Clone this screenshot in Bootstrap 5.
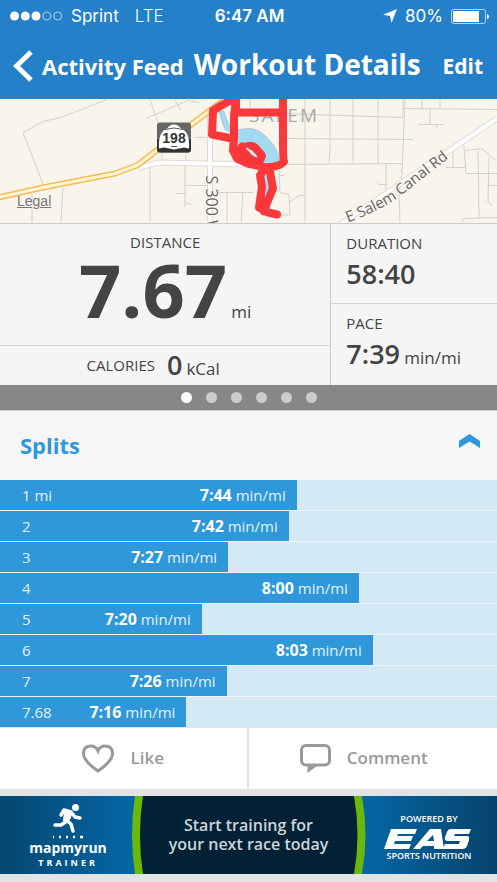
<!DOCTYPE html>
<html lang="en">
<head>
<meta charset="utf-8">
<meta name="viewport" content="width=device-width, initial-scale=1">
<title>Workout Details</title>
<link href="https://cdn.jsdelivr.net/npm/bootstrap@5.3.0/dist/css/bootstrap.min.css" rel="stylesheet">
<style>
body{font-family:"Open Sans","Noto Sans",sans-serif;background:#e3e3e3;color:#444;line-height:1.2}
button{font-family:inherit}
svg{display:block;flex:none}
.top{background:#2480c8;color:#fff}
.status{height:34px;font:17px/20px Inter,"Liberation Sans",sans-serif;padding:0 8px 2px 10px;display:grid;grid-template-columns:1fr auto 1fr}
.status strong{font-weight:600}
.lte{font-weight:300}
.bar{height:65px;padding:0 14px 2px 13px}
.bar a,.bar button{color:#fff;font-size:22px;font-weight:700;text-decoration:none;line-height:30px;white-space:nowrap}
.bar button{font-size:21px}
.bar h1{font-size:28px;font-weight:700;line-height:38px;margin:0 auto 4px 10px;white-space:nowrap}
.map{height:125px;background:#f9f4ec;border-bottom:1px solid #ccc;overflow:hidden}
.map svg{width:100%;height:100%}
.legal{left:17px;bottom:13px;font:14px/18px "Liberation Sans",Arial,sans-serif;color:#777}
.stats{background:#f5f5f5;height:161px}
.line-b{border-bottom:1px solid #d4d4d4}
.line-r{border-right:1px solid #c9c9c9}
.tag{font-size:15px;line-height:20px}
.unit{font-size:17px}
.num{font-size:27px;line-height:38px;font-weight:600}
.big{font-size:74px;line-height:76px;font-weight:700}
.dist{height:122px;padding-top:8px}
.cal{line-height:38px;height:38px}
.cell{padding:9px 0 0 15px;height:80px}
.cell .tag{margin-bottom:2px}
.pager{background:#878787;height:25px;gap:14px}
.pager button{width:11px;height:11px;border:0;padding:0;border-radius:50%;background:#ccc}
.pager button.on{background:#fff}
.splits-head{background:#f6f6f6;height:69px;padding:0 17px 0 20px;color:#2f98da;border-top:1px solid #cfcfcf}
.splits-head h2{font-size:22px;font-weight:700;margin:0}
.splits-head button{color:inherit;margin-bottom:8px}
.splits li{background:#d4e9f6;border-top:1px solid #eef7fc;height:31px}
.fill{background:#2f98da;color:#e3f2fb;height:30px;padding:0 11px 0 22px;font-size:15px;line-height:20px}
.fill b{color:#fff;font-size:16px}
.actions{background:#fff;height:62px;border-top:1px solid #e3e3e3}
.actions button{color:#999;font-size:17px;font-weight:600;border:0;background:none}
.actions button:first-child{border-right:2px solid #e6e6e6}
.ad{margin:7px 0 8px;height:78px;color:#fff;display:grid;grid-template-columns:29% 42% 29%;text-decoration:none;text-align:center}
.ad>svg{left:0;top:0;width:100%;height:100%}
.ad-copy{font-size:16px;line-height:19px;font-weight:600;color:#ccd4da}
.brand{font-size:14px;line-height:16px;font-weight:700}
.sub{font-size:9px;line-height:14px;font-weight:700;letter-spacing:3px}
.tiny{font-size:9px;line-height:11px;font-weight:600}
</style>
<script src="https://cdn.jsdelivr.net/npm/bootstrap@5.3.0/dist/js/bootstrap.bundle.min.js"></script>
</head>
<body>
<header class="top">
  <div class="status align-items-center">
    <div class="d-flex align-items-center">
      <svg width="53" height="10" viewBox="0 0 53 10" fill="#fff"><circle cx="4.500" cy="5" r="4.500"/><circle cx="15.300" cy="5" r="4.500"/><circle cx="26" cy="5" r="4.500"/><g fill="none" stroke="#b4d5ee"><circle cx="36.900" cy="5" r="4"/><circle cx="47.700" cy="5" r="4"/></g></svg>
      <span class="ms-2">Sprint</span><span class="lte ms-3">LTE</span>
    </div>
    <strong>6:47 AM</strong>
    <div class="d-flex align-items-center justify-content-end">
      <svg class="me-2" width="14" height="14" viewBox="0 0 14 14"><path d="M14 0 8.500 14 7 7 0 5.800z" fill="#fff"/></svg>
      <span class="me-1 pe-1">80%</span>
      <svg width="38" height="15" viewBox="0 0 38 15"><rect x=".5" y=".5" width="34" height="14" rx="2" fill="none" stroke="#b4d5ee"/><path d="M2 2h26v11H2z" fill="#fff"/><path d="M36 5q2 .5 2 2.500t-2 2.500z" fill="#fff"/></svg>
    </div>
  </div>
  <nav class="bar d-flex align-items-center">
    <a href="#" class="d-flex align-items-center gap-2"><svg width="21" height="32" viewBox="0 0 21 32"><path d="M18 2 3.500 16 18 30" fill="none" stroke="#fff" stroke-width="5"/></svg>Activity Feed</a>
    <h1>Workout Details</h1>
    <button class="btn p-0 border-0">Edit</button>
  </nav>
</header>
<main>
<section class="map position-relative" aria-label="Route map">
<svg viewBox="0 0 497 125" preserveAspectRatio="xMidYMid slice">
  <g fill="none" stroke="#d4d1cb" stroke-width="1">
    <path d="M107 1 61 19 43 23 23 34 44 88M150 1 158 24M146 20 188 2 199 4M175 2 181 12M63 89 61 124M32 95V124M150 68V124M162 64V54M193 39h17M186 55V64M185 64V109M185 87h25M176 95h10M185 104l6 2M218 94h32M227 94V124M243 94 241 124M250 94h3M305 0V124M330 0V52L329 64M353 0V65M378 0V65M282 15 403 19 403 0M287 40 413 41M286 66 403 65M405 0 402 75 399 94 400 124M403 10 497 11M422 0V10M440 0V10M430 10V26M419 26h25M436 30 437 26M386 65V93M376 83l3 3h8M400 71 403 75M464 48 466 75 497 75M453 51V69M446 69h20M465 52 482 50 496 62M478 52 479 120M489 59 488 104 493 107M489 87h8M489 75h8M462 124 463 120 497 119M279 71 280 94 289 96 290 116 280 117M289 104 299 97 305 97M250 0V10M280 77h4"/>
  </g>
  <g fill="none" stroke-linejoin="round">
    <path d="M340 126 497 20M138 69 160 64 250 66M210 12V125" stroke="#dedbd5" stroke-width="6"/>
    <path d="M340 126 497 20M138 69 160 64 250 66M210 12V125" stroke="#fff" stroke-width="4"/>
    <path d="M-2 99 43 89 115 75 137 67 158 51 210 12 226 0" stroke="#f2bd5a" stroke-width="6"/>
    <path d="M-2 99 43 89 115 75 137 67 158 51 210 12 226 0" stroke="#fff5cf" stroke-width="3"/>
  </g>
  <g fill="#a2daf0" stroke="#a0bdcb" stroke-width=".7">
    <path d="M218 11 224 13 230 29 240 31 247 30Q258 29 268 40 278 50 280 63L265 66 246 62 235 52 237 38 225 31z"/>
    <path d="M265 74 269 82 269 97 264 110 262 105z"/>
  </g>
  <text x="249" y="23" font-family="Open Sans, Noto Sans, sans-serif" fill="#aaa" font-size="19" letter-spacing="2">SALEM</text>
  <path d="M236 0V14L282 14M283-2V45Q283 62 284 63 281 68 266 69L248 65 237 60 233 52 234 38 234 18 236 1 228 3 213 12 212 36 232 40M237 52 243 57M244 49Q252 45 256 50L262 57Q260 66 249 65M242 48 248 59 257 64M264 70 260 77 262 88 259 109 268 114 277 116M266 70 270 73 273 90 268 102 264 113M261 98 260 106" fill="none" stroke="#fb2c2f" stroke-opacity=".94" stroke-width="8" stroke-linejoin="round" stroke-linecap="round"/>
  <path d="M247 50 255 57" stroke="#f9e4dc" stroke-width="2" stroke-linecap="round"/>
  <path id="canal" d="M348 124Q378 113 397 100L460 51" fill="none"/>
  <g font-family="Open Sans, Noto Sans, sans-serif" font-size="16" fill="#666" stroke="#f9f4ec" stroke-width="2" paint-order="stroke">
    <text transform="translate(206 77) rotate(90)">S 300 W</text>
    <text font-size="15"><textPath href="#canal">E Salem Canal Rd</textPath></text>
  </g>
  <rect x="157" y="24" width="34" height="30" rx="3" fill="#666"/><path d="M157 41h34v10q0 3-3 3h-28q-3 0-3-3z" fill="#333"/>
  <path d="M159 50Q158 33 167 30 170 26 174 26T181 30Q190 33 189 50L184 49 174 51 164 49z" fill="#fff"/>
  <path d="M165 31Q174 28 183 31M171 48h6" stroke="#555" fill="none"/>
  <text x="174" y="44" text-anchor="middle" font-family="Liberation Sans Narrow, Liberation Sans, Arial, sans-serif" font-weight="bold" font-size="14" fill="#333">198</text>
</svg>
<a href="#" class="legal position-absolute">Legal</a>
</section>
<section class="stats row g-0">
  <div class="col-8 line-r">
    <div class="dist line-b text-center">
      <div class="tag">DISTANCE</div>
      <div class="lh-1"><span class="big">7.67</span> <span class="unit">mi</span></div>
    </div>
    <div class="cal d-flex justify-content-center align-items-baseline pe-4"><span class="tag me-2 pe-1 align-self-center">CALORIES</span><span class="num me-1">0</span><span class="unit">kCal</span></div>
  </div>
  <div class="col-4">
    <div class="cell line-b"><div class="tag">DURATION</div><div class="num">58:40</div></div>
    <div class="cell"><div class="tag">PACE</div><div class="text-nowrap"><span class="num">7:39</span> <span class="unit">min/mi</span></div></div>
  </div>
</section>
<div class="pager d-flex justify-content-center align-items-center">
  <button class="on" aria-label="Page 1"></button><button aria-label="Page 2"></button><button aria-label="Page 3"></button><button aria-label="Page 4"></button><button aria-label="Page 5"></button><button aria-label="Page 6"></button>
</div>
<section>
  <div class="splits-head d-flex align-items-center justify-content-between"><h2>Splits</h2>
    <button class="btn p-0 border-0" aria-label="Collapse splits"><svg width="21" height="14" viewBox="0 0 21 14"><path d="M0 7 10.500 0 21 7v7L10.500 7.500 0 14z" fill="currentColor"/></svg></button></div>
  <ol class="splits list-unstyled m-0">
    <li><div class="fill d-flex justify-content-between align-items-center" style="width:59.7%"><span>1 mi</span><span><b>7:44</b> min/mi</span></div></li>
    <li><div class="fill d-flex justify-content-between align-items-center" style="width:58.1%"><span>2</span><span><b>7:42</b> min/mi</span></div></li>
    <li><div class="fill d-flex justify-content-between align-items-center" style="width:45.9%"><span>3</span><span><b>7:27</b> min/mi</span></div></li>
    <li><div class="fill d-flex justify-content-between align-items-center" style="width:72.2%"><span>4</span><span><b>8:00</b> min/mi</span></div></li>
    <li><div class="fill d-flex justify-content-between align-items-center" style="width:40.6%"><span>5</span><span><b>7:20</b> min/mi</span></div></li>
    <li><div class="fill d-flex justify-content-between align-items-center" style="width:75%"><span>6</span><span><b>8:03</b> min/mi</span></div></li>
    <li><div class="fill d-flex justify-content-between align-items-center" style="width:45.6%"><span>7</span><span><b>7:26</b> min/mi</span></div></li>
    <li><div class="fill d-flex justify-content-between align-items-center" style="width:37.5%"><span>7.68</span><span><b>7:16</b> min/mi</span></div></li>
  </ol>
</section>
<div class="actions d-flex">
  <button class="col-6 d-flex align-items-center justify-content-center gap-3"><svg width="32" height="29" viewBox="0 0 32 29"><path d="M16 27Q1.500 17 1.500 9.500 1.500 2 9 2 14 2 16 7 18 2 23 2 30.500 2 30.500 9.500 30.500 17 16 27z" fill="none" stroke="#999" stroke-width="3"/></svg>Like</button>
  <button class="col-6 d-flex align-items-center justify-content-center gap-3 pe-4"><svg width="31" height="29" viewBox="0 0 31 29"><rect x="1.500" y="1.500" width="28" height="19.500" rx="4.500" fill="none" stroke="#999" stroke-width="3"/><path d="M7.500 21v8L17 22z" fill="#999"/></svg>Comment</button>
</div>
<a href="#" class="ad position-relative">
  <svg class="position-absolute" viewBox="0 0 497 78" preserveAspectRatio="none">
    <defs><linearGradient id="sea" x1="0" x2="1"><stop offset="0" stop-color="#06466f"/><stop offset=".25" stop-color="#0465a2"/><stop offset=".75" stop-color="#0465a2"/><stop offset="1" stop-color="#06436b"/></linearGradient></defs>
    <path d="M0 0h497v78H0z" fill="url(#sea)"/><path d="M135 0h227Q369 39 362 78H135Q129 39 135 0z" fill="#6ab80b"/><path d="M143 0h211Q361 39 354 78H143Q137 39 143 0z" fill="#022134"/>
  </svg>
  <span class="position-relative d-flex flex-column align-items-center pt-2 pe-2">
    <svg width="30" height="36" viewBox="0 0 30 36"><circle cx="22.500" cy="3.500" r="3.500" fill="#fff"/><path d="M8 11 11 6 18 8 14 17 8 21H2M18 8 22 13 27 14M12 15 18 20 20 27" fill="none" stroke="#fff" stroke-width="3.500" stroke-linecap="round" stroke-linejoin="round"/><path d="M11 7 19 7 18 14 14 19 10 17z" fill="#fff"/><path d="M0 33h1m5 0h2m5 0h2m5 0h2m5 0h3" stroke="#fff" stroke-width="2.500"/></svg>
    <span class="brand">mapmyrun</span><span class="sub">TRAINER</span>
  </span>
  <span class="ad-copy position-relative align-self-center">Start training for<br>your next race today</span>
  <span class="position-relative d-flex flex-column align-items-center justify-content-center ms-2 pt-1">
    <span class="tiny">POWERED BY</span>
    <svg class="mt-1" width="90" height="22" viewBox="0 0 90 22" role="img" aria-label="EAS"><g fill="#fff"><path d="M7 1h26l-2 5H14l-1 2h16l-2 5H11l-1 3h17l-2 5H0zM29 21 46 1h11l3 20H50v-3H39l-3 3zM43 13h7l-1-6zM67 1h20l-2 5H71l-1 2h13q3 0 2 4l-2 6q-1 3-5 3H59l2-5h14l1-3H64q-4 0-3-4l2-5q1-3 4-3z"/></g></svg>
    <span class="tiny">SPORTS NUTRITION</span>
  </span>
</a>
</main>
</body>
</html>
